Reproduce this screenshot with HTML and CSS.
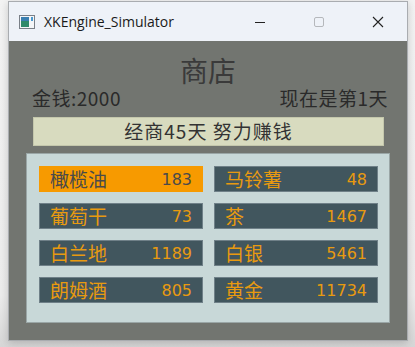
FILE: index.html
```html
<!DOCTYPE html>
<html lang="zh-CN">
<head>
    <meta charset="UTF-8">
    <meta name="viewport" content="width=device-width, initial-scale=1.0">
    <title>XKEngine_Simulator</title>
    <link rel="stylesheet" href="styles.css">
</head>
<body>
    <div class="window">
        <div class="titlebar">
            <svg class="app-icon" width="16" height="14" viewBox="0 0 16 14">
                <rect x="0.5" y="0.5" width="15" height="13" fill="#f4f6f8" stroke="#7a8088"/>
                <rect x="2" y="2" width="8" height="10" fill="#2f8a6a"/>
                <rect x="2" y="2" width="8" height="4" fill="#3a7fb0"/>
                <rect x="12" y="2" width="2" height="4" fill="#4a9ad0"/>
            </svg>
            <span class="app-name">XKEngine_Simulator</span>
            <div class="controls">
                <span class="ctl">
                    <svg width="12" height="12" viewBox="0 0 12 12"><line x1="1" y1="6.5" x2="11" y2="6.5" stroke="#222" stroke-width="1"/></svg>
                </span>
                <span class="ctl">
                    <svg width="12" height="12" viewBox="0 0 12 12"><rect x="1.5" y="1.5" width="9" height="9" rx="1.5" fill="none" stroke="#b5b8bc" stroke-width="1"/></svg>
                </span>
                <span class="ctl">
                    <svg width="12" height="12" viewBox="0 0 12 12"><path d="M1 1 L11 11 M11 1 L1 11" stroke="#222" stroke-width="1.1"/></svg>
                </span>
            </div>
        </div>
        <div class="content">
            <h1 class="title">商店</h1>
            <div class="stats">
                <span>金钱:2000</span>
                <span>现在是第1天</span>
            </div>
            <div class="banner">经商45天 努力赚钱</div>
            <div class="shop">
                <div class="item selected"><span class="name">橄榄油</span><span class="price">183</span></div>
                <div class="item"><span class="name">马铃薯</span><span class="price">48</span></div>
                <div class="item"><span class="name">葡萄干</span><span class="price">73</span></div>
                <div class="item"><span class="name">茶</span><span class="price">1467</span></div>
                <div class="item"><span class="name">白兰地</span><span class="price">1189</span></div>
                <div class="item"><span class="name">白银</span><span class="price">5461</span></div>
                <div class="item"><span class="name">朗姆酒</span><span class="price">805</span></div>
                <div class="item"><span class="name">黄金</span><span class="price">11734</span></div>
            </div>
        </div>
    </div>
</body>
</html>
```

FILE: styles.css
```css
body {
    margin: 0;
    padding: 0;
    background: linear-gradient(180deg, #f3f3f3 0%, #ececec 85%, #d6d6d6 100%);
    font-family: "Noto Sans CJK SC", "Noto Sans", sans-serif;
    height: 347px;
    overflow: hidden;
}
.window {
    margin: 1px 0 0 8px;
    width: 400px;
    border: 1px solid #a9acb0;
    box-shadow: 0 2px 8px rgba(0, 0, 0, 0.18);
    box-sizing: border-box;
}
.titlebar {
    height: 39px;
    background: #eef2f8;
    display: flex;
    align-items: center;
    padding-left: 10px;
}
.app-icon {
    flex: none;
}
.app-name {
    margin-left: 9px;
    font-family: "Open Sans", "Noto Sans", sans-serif;
    font-size: 14px;
    color: #1a1a1a;
}
.controls {
    margin-left: auto;
    display: flex;
}
.ctl {
    width: 59px;
    height: 39px;
    display: flex;
    align-items: center;
    justify-content: center;
}
.content {
    background: #727570;
    height: 299px;
    padding-top: 13px;
    box-sizing: border-box;
}
.title {
    margin: 0;
    text-align: center;
    font-size: 28px;
    font-weight: normal;
    line-height: 33px;
    color: #3a3a3a;
}
.stats {
    display: flex;
    justify-content: space-between;
    padding: 0 19px 0 23px;
    font-size: 19px;
    letter-spacing: 0.5px;
    line-height: 22px;
    color: #2a2a2a;
}
.banner {
    margin: 8px 0 0 24px;
    width: 351px;
    height: 29px;
    box-sizing: border-box;
    background: #d8dbbf;
    border: 1px solid #c4c7ac;
    text-align: center;
    font-size: 19px;
    letter-spacing: 1px;
    line-height: 26px;
    color: #333;
}
.shop {
    margin: 7px 0 0 17px;
    width: 364px;
    height: 170px;
    box-sizing: border-box;
    background: #c8d8d8;
    border: 1px solid #9aa6a6;
    padding: 12px 11px 0 12px;
    display: grid;
    grid-template-columns: 164px 164px;
    grid-auto-rows: 26px;
    column-gap: 11px;
    row-gap: 11px;
    align-content: start;
}
.item {
    background: #41565e;
    border: 1px solid #6f8088;
    box-sizing: border-box;
    display: flex;
    align-items: center;
    justify-content: space-between;
    padding: 0 10px 0 10px;
    color: #e89a10;
}
.item .name {
    font-size: 19px;
    line-height: 24px;
}
.item .price {
    font-size: 16px;
    font-family: "DejaVu Sans", sans-serif;
    font-weight: normal;
}
.item.selected {
    background: #f79a00;
    border-color: #f79a00;
    color: #4a4a4a;
}
```
